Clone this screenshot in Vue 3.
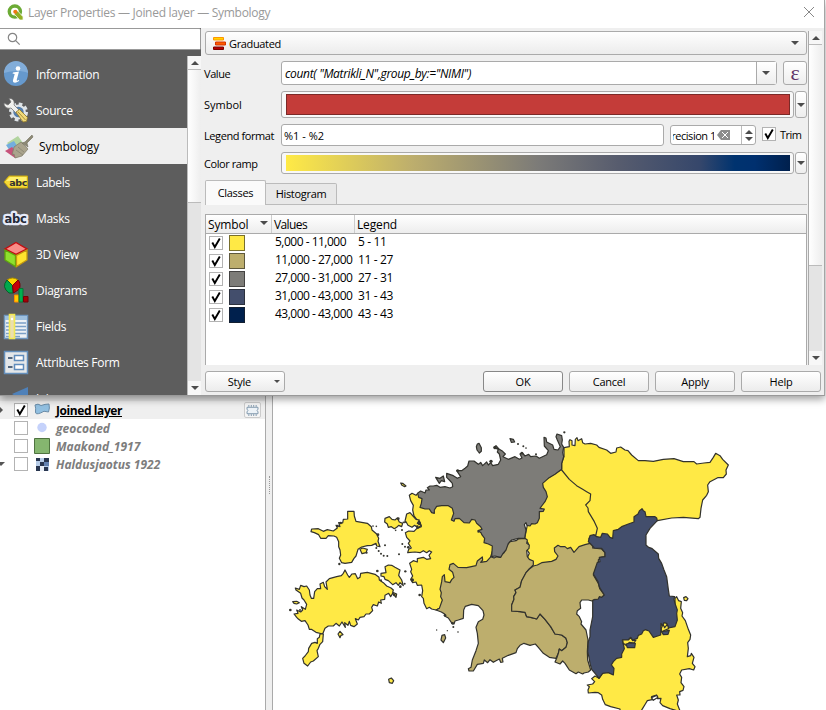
<script setup>
import { ref } from 'vue'

const sections = ref([
  { name: 'Information', icon: 'info' },
  { name: 'Source', icon: 'source' },
  { name: 'Symbology', icon: 'brush', active: true },
  { name: 'Labels', icon: 'labels' },
  { name: 'Masks', icon: 'masks' },
  { name: '3D View', icon: 'cube' },
  { name: 'Diagrams', icon: 'diagrams' },
  { name: 'Fields', icon: 'fields' },
  { name: 'Attributes Form', icon: 'form' },
  { name: 'Joins', icon: 'joins' }
])

const classes = ref([
  { color: '#ffe945', values: '5,000 - 11,000', legend: '5 - 11' },
  { color: '#bdae6d', values: '11,000 - 27,000', legend: '11 - 27' },
  { color: '#7d7c78', values: '27,000 - 31,000', legend: '27 - 31' },
  { color: '#434e6c', values: '31,000 - 43,000', legend: '31 - 43' },
  { color: '#00204d', values: '43,000 - 43,000', legend: '43 - 43' }
])

const layers = ref([
  { name: 'Joined layer', kind: 'polygon', checked: true, arrow: '▸' },
  { name: 'geocoded', kind: 'point' },
  { name: 'Maakond_1917', kind: 'fill' },
  { name: 'Haldusjaotus 1922', kind: 'raster', arrow: '▾' }
])

const regions = [
  { at: [0, 0], c: 'y', p: '413,190 480,200 560,220 620,280 645,340 632,380 640,400 500,480 490,530 468,540 455,537 448,532 440,536 432,520 430,505 425,500 428,482 425,465 412,466 408,456 398,458 392,448 398,438 392,425 395,418 389,400 400,392 412,396 412,386 430,382 440,388 452,386 447,376 455,366 448,362 440,368 430,362 420,368 405,366 383,368 386,358 394,354 385,340 390,333 380,322 376,308 386,303 402,304 410,296 424,290 420,276 410,268 402,258 398,240 400,226 392,212 388,196 396,190 408,196' },
  { at: [0, 0], c: 'y', p: '203,244 222,244 223,258 228,274 245,277 262,280 274,290 276,300 290,312 296,325 294,334 300,350 290,348 288,340 275,346 262,347 245,351 234,358 228,378 222,385 215,397 195,400 185,398 178,385 182,375 180,360 176,350 176,335 170,322 162,318 145,317 138,325 122,325 116,314 103,308 93,305 95,297 115,296 130,304 142,299 160,303 172,294 168,286 180,290 176,278 188,279 190,268 203,267' },
  { at: [0, 0], c: 'y', p: '240,358 248,354 262,358 258,368 246,371' },
  { at: [0, 0], c: 'y', p: '190,430 195,420 203,435 208,442 216,432 226,431 233,446 240,442 242,430 262,427 285,433 297,442 298,450 310,458 320,468 333,474 340,480 338,487 350,492 348,502 338,490 332,500 326,490 315,496 314,508 302,510 304,520 296,516 292,528 280,524 275,532 278,542 268,552 258,552 252,560 240,562 235,570 226,566 232,582 222,590 212,586 208,574 204,586 194,578 196,592 186,576 178,588 168,580 160,588 145,588 135,595 128,612 108,607 94,598 88,598 84,585 75,572 64,574 55,567 50,562 42,552 54,550 50,540 62,546 68,540 64,530 76,538 80,523 72,510 66,504 62,490 48,480 46,474 58,478 62,466 72,470 80,468 88,480 90,495 94,505 101,505 104,485 112,476 122,476 120,462 130,457 134,470 142,478 138,456 148,446 170,440 184,437' },
  { at: [0, 0], c: 'y', p: '120,612 130,612 128,635 120,643 115,655 111,662 115,680 100,693 92,696 83,708 72,700 68,685 75,678 85,665 86,655 95,640 105,637 112,640 112,626 118,622' },
  { at: [0, 0], c: 'y', p: '315,410 325,405 335,406 345,412 360,420 356,436 365,450 370,467 360,458 355,466 348,458 338,464 325,452 315,448 312,440 303,438 303,430 318,428' },
  { at: [0, 0], c: 'y', p: '315,265 328,260 336,268 345,270 352,264 358,276 368,280 365,290 356,286 350,292 343,296 334,290 325,292 322,282 314,276' },
  { at: [0, 0], c: 'y', p: '380,252 390,248 399,258 408,268 418,270 412,280 424,286 414,294 404,286 396,292 384,286 378,275 374,278' },
  { at: [0, 0], c: 'y', p: '362,159 368,160 378,168 374,170 366,166' },
  { at: [0, 0], c: 'y', p: '38,515 50,514 58,518 50,522 42,520' },
  { at: [0, 0], c: 'y', p: '174,612 180,604 189,614 183,616 180,623' },
  { at: [0, 0], c: 'y', p: '326,748 334,744 341,752 337,760 328,758' },
  { at: [0, 0], c: 't', p: '486,616 494,614 497,624 490,638 483,630' },
  { at: [360, 0], c: 'y', p: '485,118 500,125 540,155 590,180 600,230 620,280 610,312 583,316 567,325 570,345 540,380 480,400 400,415 396,410 398,398 380,388 388,370 378,355 385,340 374,325 385,270 410,240 420,160' },
  { at: [810, 0], c: 'y', p: '42,53 58,50 57,34 60,29 66,32 66,45 75,47 76,28 81,23 84,32 95,26 98,38 105,42 122,40 140,45 147,52 170,60 182,70 198,66 200,54 212,51 225,60 234,62 245,75 265,92 285,92 310,94 340,88 372,86 400,95 432,95 440,102 462,99 480,97 490,82 497,70 510,77 518,88 535,105 528,120 529,132 520,143 503,143 480,155 473,165 475,185 470,196 458,210 453,235 450,262 445,266 400,262 365,264 322,272 280,280 250,300 200,330 150,330 137,318 142,295 133,275 115,245 114,234 107,225 120,212 122,192 110,185 98,178 80,167 58,148 35,120 35,100 42,80' },
  { at: [840, 390], c: 'y', p: '345,115 350,110 356,122 364,125 362,145 368,158 366,168 376,182 385,208 392,225 390,238 383,248 385,265 382,290 392,287 394,280 402,292 397,310 405,320 401,330 388,326 365,330 359,342 365,352 363,368 372,380 369,391 359,395 360,405 350,405 355,420 352,432 361,455 330,446 308,437 300,428 303,415 292,416 290,405 275,410 280,418 262,422 256,432 248,445 242,455 180,455 180,447 152,440 136,434 128,418 125,405 115,398 105,397 85,399 84,390 88,380 82,375 98,372 104,365 95,356 105,348 117,355 140,320 170,260 200,215 300,180 345,160' },
  { at: [450, 330], c: 't', p: '183,50 192,54 200,50 210,52 214,43 222,38 228,20 240,5 258,2 265,-3 285,-5 292,0 290,10 298,15 297,25 290,32 292,50 298,58 310,63 310,75 298,87 288,98 275,122 270,142 255,150 258,158 251,170 252,178 245,195 245,213 270,215 285,217 290,230 305,233 320,237 330,222 345,238 362,260 375,282 395,285 408,295 412,308 408,322 395,332 388,327 385,340 378,355 358,352 340,340 325,322 316,312 300,316 282,310 270,316 262,326 258,338 235,346 217,355 219,366 212,367 208,357 198,362 190,367 180,359 173,368 163,360 160,370 142,373 130,393 117,393 115,386 123,382 127,360 138,332 145,310 142,280 138,262 145,245 158,238 162,225 159,212 145,197 125,193 106,199 101,210 100,235 85,240 75,243 72,252 66,250 55,234 45,229 44,222 34,216 18,210 28,205 37,180 32,170 34,158 30,148 35,125 37,110 43,104 45,125 60,128 65,119 72,112 68,97 57,88 60,74 70,70 84,82 110,83 138,77 142,63 157,51 158,60 152,67 170,64' },
  { at: [450, 330], c: 't', p: '310,78 322,75 335,68 365,64 378,58 384,48 374,35 373,24 384,16 392,20 405,20 412,26 422,22 432,37 447,20 465,14 480,10 490,12 488,24 515,27 525,38 525,50 512,52 505,60 506,75 498,88 490,105 505,130 509,146 523,165 515,172 508,173 505,180 495,178 486,183 475,180 455,180 450,188 452,205 442,212 440,222 448,230 455,245 453,252 468,270 474,300 472,335 473,360 482,390 475,396 462,399 458,402 445,396 438,401 418,390 405,370 398,363 390,372 375,366 380,355 385,340 388,327 395,332 408,322 412,308 408,295 395,285 375,282 362,260 345,238 330,222 320,237 305,233 290,230 285,217 270,215 245,213 245,195 252,178 251,170 258,158 255,150 270,142 275,122 288,98 298,87' },
  { at: [360, 0], c: 'g', p: '53,190 62,183 75,189 78,180 88,180 82,173 90,168 100,168 110,166 120,172 135,170 150,174 158,170 157,160 148,150 140,142 140,130 160,137 172,145 182,140 170,122 185,122 196,114 203,108 207,93 222,93 235,103 242,97 248,107 260,96 265,105 272,98 278,107 295,103 302,90 298,72 292,66 295,58 282,52 288,47 298,58 308,64 316,72 309,80 325,88 345,80 358,88 366,84 360,72 366,67 375,78 386,73 392,80 408,78 418,85 440,74 445,62 433,48 432,22 438,24 440,36 452,42 458,45 462,58 474,60 481,50 472,30 468,20 471,12 485,17 487,30 485,42 491,52 488,68 491,80 485,100 485,118 465,133 445,145 428,160 430,172 438,185 442,200 435,215 425,228 420,235 433,237 430,244 418,245 418,265 412,278 405,282 395,281 390,288 381,286 378,278 373,284 378,300 374,325 355,325 335,330 325,340 318,360 308,372 302,382 285,378 275,380 277,348 265,342 252,338 254,325 246,315 243,308 234,302 246,298 242,290 230,280 225,270 215,268 208,279 192,278 178,265 165,266 162,274 154,270 161,250 157,235 145,227 125,227 110,229 103,240 103,250 95,248 88,237 75,237 60,232 64,220 66,206 56,202' },
  { at: [360, 0], c: 'g', p: '107,142 120,145 130,138 134,155 124,152 118,160' },
  { at: [360, 0], c: 'g', p: '232,42 237,40 244,53 244,64 238,69 231,60 229,50' },
  { at: [360, 0], c: 'g', p: '330,26 340,28 344,36 334,37' },
  { at: [810, 0], c: 'n', p: '322,272 320,264 315,260 288,260 285,245 280,242 276,236 268,243 264,252 252,260 252,276 235,282 215,290 205,298 190,302 188,325 180,322 172,312 157,310 152,322 140,320 132,314 120,317 115,335 122,342 133,354 155,355 165,368 165,380 148,382 150,395 142,397 130,432 144,455 149,473 163,495 155,502 148,500 145,507 130,510 128,512 128,560 120,600 120,620 115,635 113,665 117,682 120,700 125,718 140,736 147,745 158,730 175,728 190,735 192,715 184,705 190,695 200,685 215,682 215,672 223,656 217,630 235,630 242,622 248,630 262,625 265,616 275,612 280,602 286,599 297,603 310,622 332,615 333,580 338,588 342,578 350,580 355,594 375,590 382,570 380,550 382,540 375,520 372,508 374,500 358,498 355,478 350,440 342,420 335,400 326,385 325,372 305,355 296,352 288,345 288,315 300,295' },
  { at: [840, 390], c: 'y', p: '188,240 205,240 212,233 218,242 228,240 222,249 208,247 198,256 190,250' },
  { at: [840, 390], c: 'y', p: '304,205 309,193 314,203 322,193 326,206 316,210 304,216' },
  { at: [840, 390], c: 'n', p: '198,252 212,249 226,250 224,263 202,263' },
  { at: [840, 390], c: 'n', p: '305,215 328,211 324,223 310,224' },
  { at: [840, 390], c: 'y', p: '371,113 378,110 384,116 380,122 373,121' },
  { at: [840, 390], c: 'w', p: '274,413 290,406 294,412 280,421' }
]
const fills = { y: '#ffe945', t: '#bdae6d', g: '#7d7c78', n: '#434e6c', w: '#ffffff' }

const islets = [
  [172, 288, 4], [182, 279, 4], [279, 288, 2.5], [289, 289, 2.5], [294, 314, 4], [315, 346, 3], [289, 354, 3], [296, 363, 3], [303, 371, 3], [311, 377, 3], [322, 378, 3],
  [357, 373, 3], [367, 342, 3], [375, 350, 3], [385, 352, 4], [366, 300, 3], [347, 301, 2.5], [370, 277, 2.5], [355, 266, 4], [376, 424, 3.5], [292, 423, 4], [374, 461, 3], [361, 470, 4], [303, 451, 3],
  [31, 540, 4], [60, 540, 3], [178, 402, 3.5], [419, 495, 4], [470, 600, 2], [502, 602, 2], [534, 606, 2.5], [518, 580, 4], [520, 591, 3], [495, 556, 4], [397, 450, 5], [412, 290, 4], [418, 280, 5], [343, 495, 4], [260, 368, 3],
  [633, 94, 5], [645, 53, 5], [714, 42, 3], [730, 49, 3], [738, 54, 2.5], [853, 7, 3.5], [768, 73, 3], [726, 70, 4], [533, 122, 4], [595, 305, 3]
]
</script>

<template>
  <div class="screen">
    <section class="dialog">
      <header class="titlebar">
        <svg class="logo" viewBox="0 0 18 18">
          <circle cx="8.300" cy="8" r="5.900" fill="none" stroke="#6cab35" stroke-width="3.600" />
          <path d="M8 7.500h3.500l5.500 6v3.500h-3.500l-5.500-6z" fill="#93b023" stroke="#fff" stroke-width=".8" />
          <circle cx="8.800" cy="8.200" r="2.200" fill="#ee7913" />
        </svg>
        <h1>Layer Properties — Joined layer — Symbology</h1>
        <svg class="close" viewBox="0 0 12 12"><path d="M1 1l10 10M11 1L1 11" /></svg>
      </header>

      <div class="body">
        <aside class="side">
          <div class="search">
            <svg viewBox="0 0 14 14"><circle cx="5.500" cy="5.500" r="4.200" /><path d="M8.700 8.700l4 4" /></svg>
          </div>
          <div class="side-main">
            <nav>
              <div v-for="s in sections" :key="s.name" class="item" :class="{ active: s.active }">
                <svg viewBox="0 0 26 26" class="ico">
                  <g v-if="s.icon === 'info'">
                    <circle cx="13" cy="13" r="12" fill="#6699cd" /><path d="M1 12a12 12 0 0 1 24 0c-7-3-17-2-24 0z" fill="#82add9" />
                    <circle cx="15" cy="7.500" r="2.300" fill="#fff" />
                    <path d="M10 11.500l6-1-2.300 8.500c0 1 1 .8 2.200-.2l.3 1c-2 2-6.500 3-6.300-.3l1.800-6.500-2.200-.4z" fill="#fff" />
                  </g>
                  <g v-else-if="s.icon === 'source'">
                    <circle cx="15.500" cy="15" r="8" fill="none" stroke="#dfe4e8" stroke-width="3" stroke-dasharray="3.600 2.683" />
                    <circle cx="15.500" cy="15" r="6.300" fill="#557eac" stroke="#dfe4e8" stroke-width="2.200" />
                    <path d="M6 1.500c4-.5 6 3 5 6.500l8 8-3 3-8-8c-4 1-7-1-7-5l4 2 3-3z" fill="#f1f1ee" stroke="#777" stroke-width=".8" />
                    <path d="M13 15l3.500-2.500 8 8-1 4-3.500.5z" fill="#f0d977" stroke="#8c7528" stroke-width=".8" /><path d="M15 15l7.500 8" stroke="#a78e3c" />
                  </g>
                  <g v-else-if="s.icon === 'brush'">
                    <path d="M1 10l11-7 5 7-9 7z" fill="#b2d49f" /><path d="M0 12l8-4 5 8-7 5z" fill="#72aede" /><path d="M-1 18l7-4 8 9-5 2z" fill="#c7537b" />
                    <path d="M8 14l7-5 7 7-6 7-7 2-1-4-2 1z" fill="#aaa48d" stroke="#807b67" stroke-width=".7" />
                    <path d="M10 17l7 5M12 14l6 5" stroke="#7b7766" stroke-width=".6" /><path d="M16 10l3-1 5-5 2-2 1 2-6 6 1 4z" fill="#8d8974" stroke="#716d5c" stroke-width=".6" />
                  </g>
                  <g v-else-if="s.icon === 'labels'">
                    <path d="M1 13l5-6h18.500v12H6z" fill="#f5d936" stroke="#c8a812" /><path d="M3 12l4-4h16.500v4z" fill="#fff06d" />
                    <text x="6.200" y="16.500" class="abc">abc</text>
                  </g>
                  <g v-else-if="s.icon === 'masks'">
                    <text x="1.600" y="17.500" class="abc mask">abc</text>
                  </g>
                  <g v-else-if="s.icon === 'cube'">
                    <path d="M13 1.500l11 6.500-11 5.500L2 8z" fill="#fa8c87" stroke="#c40c10" stroke-width="1.400" />
                    <path d="M2 9l10.500 5.500v11L2 19z" fill="#8ee02e" stroke="#60a50c" stroke-width="1.300" /><path d="M24 9l-10.500 5.500v11L24 19z" fill="#ffe32e" stroke="#c59a0e" stroke-width="1.300" />
                  </g>
                  <g v-else-if="s.icon === 'diagrams'">
                    <path d="M9.500 8.500L4 3q5.500-4 11 0z" fill="#ffd500" stroke="#a88d00" /><path d="M9.500 8.500L4 3q-6 7 2 13h4z" fill="#00a84d" stroke="#075f2b" /><path d="M9.500 8.500L15 3q3 3 1.500 9l-6 4z" fill="#c50009" stroke="#780006" />
                    <path d="M11.500 18h4v7h-4z" fill="#ffca00" stroke="#ff8a00" /><path d="M16 11.500h4V25h-4z" fill="#00b050" stroke="#087337" /><path d="M20.500 19.500h4.500V25h-4.500z" fill="#a70006" stroke="#730006" />
                  </g>
                  <g v-else-if="s.icon === 'fields'">
                    <path d="M1.500 2.500h23v23h-23z" fill="#eef2f5" stroke="#6f96bf" stroke-width="1.500" /><path d="M2 3h22v4H2z" fill="#9fc0df" />
                    <path d="M3 10h20M3 13.500h20M3 17h20M3 20.500h20M3 23.500h14" stroke="#7ba0c7" stroke-width="1.500" />
                    <path d="M6.500 1.500h5v24h-5z" fill="#eadfae" stroke="#f2e853" stroke-width="1.600" /><circle cx="9" cy="6" r="1.200" fill="#fff" />
                  </g>
                  <g v-else-if="s.icon === 'form'">
                    <path d="M1.500 2.500h23v22h-23z" fill="#e4e7e9" stroke="#6590bd" stroke-width="1.500" />
                    <path d="M11.500 6.500h9v5h-9zM11.500 15.500h9v5h-9z" fill="#fff" stroke="#5f8cbc" stroke-width="1.500" /><path d="M5 9h4.500M5 18h4.500" stroke="#526780" stroke-width="2" />
                  </g>
                  <path v-else d="M9 9L25 2v16z" fill="#4f81b9" />
                </svg>
                <span>{{ s.name }}</span>
              </div>
            </nav>
            <div class="vbar side-bar"><i class="up"></i><div class="thumb"></div><div class="track"></div><i class="down"></i></div>
          </div>
        </aside>

        <main class="panel">
          <div class="scroll">
            <div class="form">
              <div class="combo">
                <svg viewBox="0 0 14 14" class="grad"><path d="M.5 1.500h10v2.500H.5z" fill="#ffd500" stroke="#ff9500" /><path d="M2.500 6h10v3h-10z" fill="#ff5b00" stroke="#d43500" /><path d="M.5 11h10v2.500H.5z" fill="#b40000" stroke="#7d0000" /></svg>
                <span class="t-grad">Graduated</span><i class="down"></i>
              </div>
              <div class="row r-value">
                <label class="t-value">Value</label>
                <div class="edit expr"><em>count( "Matrikli_N",group_by:="NIMI")</em><b><i class="down"></i></b></div>
                <button class="eps">ε</button>
              </div>
              <div class="row r-symbol">
                <label>Symbol</label>
                <div class="swatchbox"><div class="red"></div></div><button class="drop"><i class="down"></i></button>
              </div>
              <div class="row r-format">
                <label class="t-format">Legend format</label>
                <div class="edit fmt"><span>%1 - %2</span></div>
                <div class="spin"><span class="clip"><span>Precision 15</span></span>
                  <svg viewBox="0 0 13 10"><path d="M0 5l4-5h9v10H4z" fill="#8c8c8c" /><path d="M5 2l6 6M11 2L5 8" stroke="#fff" /></svg>
                  <div class="arrows"><i class="up"></i><i class="down"></i></div>
                </div>
                <span class="check"><svg viewBox="0 0 12 12"><path d="M2.300 5.500l2.500 4.500 5-8.500" /></svg></span><span class="trim">Trim</span>
              </div>
              <div class="row r-ramp">
                <label class="t-ramp">Color ramp</label>
                <div class="swatchbox"><div class="ramp"></div></div><button class="drop"><i class="down"></i></button>
              </div>
              <div class="tabs"><div class="tab on"><span>Classes</span></div><div class="tab"><span>Histogram</span></div></div>
              <div class="table">
                <div class="thead"><div class="h1">Symbol<i class="down"></i></div><div class="h2">Values</div><div class="h3">Legend</div></div>
                <div v-for="c in classes" :key="c.values" class="tr">
                  <span class="check"><svg viewBox="0 0 12 12"><path d="M2.300 5.500l2.500 4.500 5-8.500" /></svg></span>
                  <span class="sw" :style="{ background: c.color }"></span>
                  <span class="vals">{{ c.values }}</span><span class="leg">{{ c.legend }}</span>
                </div>
              </div>
            </div>
            <div class="vbar main-bar"><i class="up"></i><div class="thumb"></div><div class="track"></div><i class="down"></i></div>
          </div>
          <footer>
            <button class="btn style"><span>Style</span><i class="down"></i></button>
            <div class="actions"><button class="btn ok">OK</button><button class="btn">Cancel</button><button class="btn">Apply</button><button class="btn">Help</button></div>
          </footer>
        </main>
      </div>
    </section>

    <section class="workspace">
      <div class="layers">
        <div v-for="l in layers" :key="l.name" class="layer" :class="{ cur: l.checked }">
          <span class="tri" :class="{ right: l.arrow === '▸', open: l.arrow === '▾' }"></span>
          <span class="check"><svg v-if="l.checked" viewBox="0 0 12 12"><path d="M2.300 5.500l2.500 4.500 5-8.500" /></svg></span>
          <svg viewBox="0 0 16 16" class="lico">
            <path v-if="l.kind === 'polygon'" d="M1 3q3-2 6 .5Q11 2 15 2q1 4-.5 8-5-2-8 1-5 2-5-1 .500-4-.5-7z" fill="#91bfe0" stroke="#6a8ca8" />
            <circle v-else-if="l.kind === 'point'" cx="8" cy="7.500" r="4.700" fill="#c5d2fb" />
            <path v-else-if="l.kind === 'fill'" d="M.5.5h15v15H.5z" fill="#85b66f" stroke="#4f7340" />
            <g v-else><path d="M2 2h13v13H2z" fill="#b8cde8" /><path d="M2 2h4v3H2zM10 2h5v4h-5zM6 6h4v4H6zM2 10h4v5H2zM10 11h4v4h-4z" fill="#29364f" /><path d="M6 10h4v5H6z" fill="#e9eff7" /><path d="M10 6h5v4h-5z" fill="#6382b1" /></g>
          </svg>
          <span class="lname" :class="l.kind">{{ l.name }}</span>
          <span v-if="l.checked" class="chip"><svg viewBox="0 0 14 12"><path d="M1 2.500h12v2l-1 1.500 1 1.500v2H1v-2L2 6 1 4.500z" fill="#edf3f8" stroke="#7993a8" /><path d="M3 0v2M5.700 0v2M8.300 0v2M11 0v2M3 10v2M5.700 10v2M8.300 10v2M11 10v2" stroke="#7993a8" /></svg></span>
        </div>
      </div>
      <div class="splitter"><span></span></div>
      <svg class="map" viewBox="273 396 553 314">
        <g transform="translate(280 430) scale(.33333)">
          <g v-for="(r, i) in regions" :key="i" :transform="`translate(${r.at[0]} ${r.at[1]})`">
            <polygon :points="r.p" :fill="fills[r.c]" />
          </g>
          <circle v-for="(d, i) in islets" :key="'d' + i" :cx="d[0]" :cy="d[1]" :r="d[2]" fill="#34342e" />
        </g>
      </svg>
    </section>
  </div>
</template>

<style>
body { margin: 0; overflow: hidden; background: #fff; }
</style>

<style scoped>
* { box-sizing: border-box; }
.screen { width: 826px; height: 710px; overflow: hidden; background: #fff; font: 12px/16px "Open Sans", "Noto Sans", sans-serif; color: #000; white-space: nowrap; display: flex; flex-direction: column; }
button { font: inherit; color: inherit; padding: 0; margin: 0; }
i { display: block; width: 0; height: 0; flex: none; border: 4px solid transparent; }
i.down { border-top-color: #4c4c4c; border-bottom: 0; }
i.up { border-bottom-color: #4c4c4c; border-top: 0; }

.dialog { position: relative; z-index: 2; width: 825px; height: 396px; flex: none; background: #efefef; border-right: 1px solid #a5a5a5; border-bottom: 1px solid #999; box-shadow: 0 3px 8px rgba(0, 0, 0, .4); display: flex; flex-direction: column; overflow: visible; }
.titlebar { height: 28px; flex: none; background: #fff; display: flex; align-items: center; padding: 0 9px 2px 7px; }
.logo { width: 17px; height: 17px; margin-top: -1px; }
.titlebar h1 { font: inherit; color: #999; margin: 0 auto 0 4px; letter-spacing: -.29px; }
.close { width: 12px; height: 12px; margin-top: -2px; }
.close path { stroke: #888; fill: none; }
.body { flex: 1; min-height: 0; display: flex; }

.side { width: 201px; background: #5d5d5d; display: flex; flex-direction: column; overflow: hidden; }
.search { height: 22px; flex: none; background: #fff; border: 1px solid #999; border-left: 0; border-radius: 0 2px 2px 0; padding: 3px 7px; }
.search svg { width: 14px; height: 14px; fill: none; stroke: #858585; stroke-width: 1.200; display: block; }
.side-main { flex: 1; min-height: 0; display: flex; padding-top: 6px; }
nav { width: 187px; height: 339px; overflow: hidden; }
.item { height: 36px; display: flex; align-items: center; padding: 1px 0 0 3px; color: #fff; gap: 7px; letter-spacing: -.3px; }
.item.active { background: #efefef; color: #000; padding-left: 6px; letter-spacing: -.1px; }
.ico { width: 26px; height: 26px; overflow: visible; flex: none; margin-top: -2px; }
.abc { font: bold 9.500px "DejaVu Sans"; fill: #333; letter-spacing: -.3px; }
.mask { font-size: 11.500px; stroke: #e6eaf8; stroke-width: 4.500px; stroke-linejoin: round; paint-order: stroke; fill: #252a38; }
.vbar { width: 14px; flex: none; background: #e4e4e4; border-left: 1px solid #bbb; display: flex; flex-direction: column; align-items: center; }
.vbar .thumb { width: 100%; background: linear-gradient(90deg, #fff, #eee); border: solid #bbb; border-width: 1px 0; }
.vbar .track { flex: 1; }
.vbar > i.up { margin: 5px 0 4px; }
.vbar > i.down { margin: 5px 0; }
.side-bar { background: linear-gradient(#f7f7f7 14px, #e4e4e4 14px calc(100% - 14px), #f7f7f7 calc(100% - 14px)); }
.side-bar .thumb { height: 134px; }

.panel { flex: 1; min-width: 0; display: flex; flex-direction: column; }
.scroll { height: 337px; display: flex; padding: 3px 0 0 4px; }
.form { width: 602px; }
.combo { height: 24px; width: 602px; border: 1px solid #aaa; border-radius: 3px; background: linear-gradient(#fefefe, #ececec); display: flex; align-items: center; padding: 2px 7px 0 7px; }
.combo i { margin: -2px 0 0 auto; }
.grad { width: 14px; height: 14px; margin: -2px 2px 0 0; }
.row { display: flex; align-items: center; }
.row label { width: 77px; margin-left: -1px; flex: none; font-size: 11px; }
.row .t-value { letter-spacing: -.4px; padding-top: 2px; }
.row .t-format { letter-spacing: -.42px; padding-top: 2px; }
.row .t-ramp { letter-spacing: -.42px; padding-top: 2px; }
.t-grad, .trim, .tab, .btn { font-size: 11px; }
.t-grad { letter-spacing: -.35px; }
.trim { letter-spacing: -.5px; }
.tab { letter-spacing: -.3px; }
.r-value { margin-top: 6px; height: 24px; }
.r-symbol { margin-top: 6px; height: 27px; }
.r-format { margin-top: 6px; height: 22px; }
.r-ramp { margin-top: 6px; height: 22px; }
.edit { height: 100%; border: 1px solid #aaa; border-radius: 3px; background: #fff; display: flex; align-items: center; font-size: 11px; }
.expr { width: 496px; padding-left: 3px; margin-right: 6px; }
.expr em { letter-spacing: -.34px; font-size: 12px; padding-top: 1px; }
.expr b { margin-left: auto; width: 20px; height: 100%; border-left: 1px solid #aaa; background: linear-gradient(#fff, #eee); display: grid; place-items: center; }
.expr b i { margin-right: 2px; }
.eps { width: 24px; height: 24px; border: 1px solid #aaa; border-radius: 3px; background: linear-gradient(#fff, #eee); color: #5f3468; font: 22px/18px "Liberation Serif", serif; }
.swatchbox { width: 513px; height: 100%; border: 1px solid #aaa; border-radius: 3px; background: #f8f8f8; padding: 2px 3px 2px 4px; margin-right: 1px; }
.red { height: 100%; background: #c43c39; border: 1px solid #7b2927; }
.ramp { height: 16px; background: linear-gradient(90deg, #ffea46, #bdae6d 25%, #7c7b78 50%, #575c6e 66%, #36476b 82%, #00336f 89%, #00306f 93%, #00204d); }
.drop { width: 12px; height: 100%; border: 1px solid #aaa; border-radius: 3px; background: linear-gradient(#fff, #eee); display: grid; place-items: center; }
.fmt { width: 383px; padding: 1px 0 0 2px; margin-right: 6px; }
.spin { width: 86px; height: 20px; border: 1px solid #aaa; border-radius: 3px; background: #fff; display: flex; align-items: center; font-size: 11px; padding-left: 2px; }
.clip { width: 41px; overflow: hidden; display: flex; margin-right: 3px; padding-top: 1px; }
.clip span { margin-left: -8px; letter-spacing: -.45px; }
.spin svg { width: 13px; height: 10px; }
.arrows { margin-left: auto; width: 14px; height: 100%; border-left: 1px solid #bbb; display: flex; flex-direction: column; align-items: center; justify-content: center; gap: 3px; }
.check { width: 14px; height: 14px; border: 1px solid #b3b3b3; background: #fff; display: block; flex: none; }
.check svg { display: block; width: 12px; height: 12px; }
.check path { fill: none; stroke: #000; stroke-width: 1.900; }
.r-format .check { margin: -2px 4px 0 6px; }
.tabs { height: 25px; margin-top: 6px; width: 602px; display: flex; align-items: flex-end; box-shadow: inset 0 -1px #bbb; }
.tab { width: 71px; height: 22px; border: 1px solid #bbb; border-left: 0; background: #e8e8e8; display: grid; place-items: center; border-radius: 0 2px 0 0; }
.tab.on { width: 61px; height: 25px; background: #fafafa; border-left: 1px solid #bbb; border-bottom: 0; border-radius: 2px 2px 0 0; }
.table { margin-top: 9px; height: 151px; border: 1px solid #aaa; border-bottom: 0; background: #fff; }
.thead { height: 19px; display: flex; background: linear-gradient(#fff, #ededed); border-bottom: 1px solid #aaa; }
.thead > div { padding-left: 2px; border-right: 1px solid #ccc; line-height: 20px; display: flex; letter-spacing: -.15px; }
.thead .h1 { width: 66px; }
.thead .h1 i { margin: 6px 3px 0 auto; }
.thead .h2 { width: 83px; letter-spacing: -.6px; }
.thead .h3 { border: 0; }
.tr { height: 18px; display: flex; align-items: center; padding-left: 3px; }
.sw { width: 16px; height: 16px; margin-left: 6px; border: 1px solid rgba(30, 30, 30, .6); }
.vals { width: 83px; margin: -2px 0 0 30px; letter-spacing: -.5px; }
.leg { margin-top: -2px; letter-spacing: -.35px; }
.main-bar { margin-left: 1px; height: 334px; border-left-color: #aaa; background: linear-gradient(#f7f7f7 14px, #e4e4e4 14px calc(100% - 14px), #f7f7f7 calc(100% - 14px)); }
.main-bar .thumb { height: 222px; }
footer { height: 30px; padding: 6px 3px 0 4px; display: flex; justify-content: space-between; }
.btn { width: 80px; height: 21px; border: 1px solid #aaa; border-radius: 3px; background: linear-gradient(#fff, #ececec); text-align: center; line-height: 20px; letter-spacing: -.25px; }
.btn.ok { border-color: #888; }
.actions { display: flex; gap: 6px; }
.style { display: flex; align-items: center; justify-content: flex-end; padding-right: 4px; }
.style span { margin-right: 23px; }
.style i { border-width: 3px; border-bottom: 0; }

.workspace { flex: 1; display: flex; min-height: 0; }
.layers { width: 266px; padding-top: 5px; border-right: 1px solid #aaa; background: #fff; box-shadow: inset 0 5px #e4e4e4; }
.layer { height: 18px; display: flex; align-items: center; }
.layer.cur { background: #efefef; }
.layer .check { margin-right: 6px; }
.tri { width: 14px; height: 8px; flex: none; }
.tri.right { width: 0; border: 4px solid transparent; border-left-color: #555; border-right: 0; margin: 0 11px 0 -1px; }
.tri.open { width: 0; height: 0; border: 4px solid transparent; border-top-color: #555; border-bottom: 0; margin: 0 9px 0 -3px; }
.lico { width: 16px; height: 16px; margin-right: 6px; flex: none; }
.lname { font-weight: bold; font-style: italic; color: #7d7d7d; padding-top: 2px; }
.lname.polygon { font-style: normal; color: #000; text-decoration: underline; letter-spacing: -.42px; }
.chip { margin: 0 4px 0 auto; width: 17px; height: 16px; border: 1px solid #ccc; background: #f5f5f5; display: grid; place-items: center; border-radius: 2px; }
.chip svg { width: 13px; height: 11px; }
.splitter { width: 7px; background: #efefef; border-right: 1px solid #aaa; display: flex; justify-content: center; padding-top: 80px; }
.splitter span { height: 18px; border-left: 1px dotted #999; }
.map { width: 553px; height: 314px; display: block; }
.map polygon { stroke: #32322d; stroke-width: 3.600; stroke-linejoin: round; }
</style>
